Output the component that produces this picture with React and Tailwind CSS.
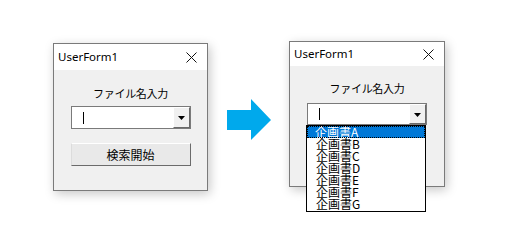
function CloseIcon() {
  return (
    <svg width="11" height="11" viewBox="0 0 11 11" className="block">
      <path d="M0.5 0.5 L10.5 10.5 M10.5 0.5 L0.5 10.5" stroke="#111" strokeWidth="1" fill="none" />
    </svg>
  );
}

function DropButton() {
  return (
    <div className="w-[17px] h-full bg-[#f0f0f0] border-t border-l border-t-white border-l-white border-r border-b border-r-[#696969] border-b-[#696969] flex items-center justify-center">
      <svg width="7" height="4" viewBox="0 0 7 4" className="block mt-[1px]">
        <path d="M0 0 H7 L3.5 4 Z" fill="#000" />
      </svg>
    </div>
  );
}

function Combo({ h }) {
  return (
    <div className={`w-[120px] ${h} bg-white border border-[#7a7a7a] flex items-stretch`}>
      <div className="flex-1 flex items-center pl-[11px]">
        <div className="w-px h-[12px] bg-black" />
      </div>
      <DropButton />
    </div>
  );
}

function TitleBar({ h }) {
  return (
    <div className={`${h} bg-white flex items-center justify-between pl-[4px] pr-[10px]`}>
      <span className="text-[11.5px] text-black" style={{ fontFamily: '"Noto Sans", sans-serif' }}>
        UserForm1
      </span>
      <CloseIcon />
    </div>
  );
}

const items = ["企画書A", "企画書B", "企画書C", "企画書D", "企画書E", "企画書F", "企画書G"];

export default function App() {
  const jp = { fontFamily: '"Noto Sans CJK JP", sans-serif' };
  return (
    <div className="w-[513px] h-[246px] bg-white flex items-start pl-[53px] pt-[41px]">
      {/* before */}
      <div className="mt-[2px] w-[155px] h-[148px] border border-[#7a7a7a] bg-[#f0f0f0] shadow-[2px_3px_10px_rgba(0,0,0,0.22)] flex flex-col">
        <TitleBar h="h-[26px]" />
        <div className="flex flex-col items-center" style={jp}>
          <div className="mt-[17px] h-[12px] leading-[12px] text-[11px] text-black tracking-[-0.3px]">ファイル名入力</div>
          <div className="mt-[7px]">
            <Combo h="h-[23px]" />
          </div>
          <button className="mt-[14px] w-[120px] h-[23px] bg-[#e9e9e9] border border-t-white border-l-[#dcdcdc] border-r-[#6b6b6b] border-b-[#6b6b6b] text-[12px] leading-none text-black flex items-center justify-center">
            検索開始
          </button>
        </div>
      </div>

      {/* arrow */}
      <svg width="45" height="42" viewBox="0 0 45 42" className="ml-[19px] mt-[58px] block">
        <path d="M0 11 H24 V0 L44 21 L24 41 V31 H0 Z" fill="#00a9ec" />
      </svg>

      {/* after */}
      <div className="relative ml-[17px] w-[156px] h-[146px] border border-[#7a7a7a] bg-[#f0f0f0] shadow-[2px_3px_10px_rgba(0,0,0,0.22)] flex flex-col">
        <TitleBar h="h-[24px]" />
        <div className="flex flex-col items-center" style={jp}>
          <div className="mt-[16px] h-[12px] leading-[12px] text-[11px] text-black tracking-[-0.3px]">ファイル名入力</div>
          <div className="mt-[9px]">
            <Combo h="h-[22px]" />
          </div>
        </div>
        <div className="absolute left-[16px] top-[83px] w-[120px] h-[87px] bg-white border border-black" style={jp}>
          {items.map((t, i) => (
            <div
              key={t}
              className={
                i === 0
                  ? "h-[12px] leading-[12px] text-[12px] pl-[8px] bg-[#0078d7] text-white outline outline-1 outline-dotted outline-black -outline-offset-1"
                  : "h-[12px] leading-[12px] text-[12px] pl-[9px] text-black"
              }
            >
              {t}
            </div>
          ))}
        </div>
      </div>
    </div>
  );
}
